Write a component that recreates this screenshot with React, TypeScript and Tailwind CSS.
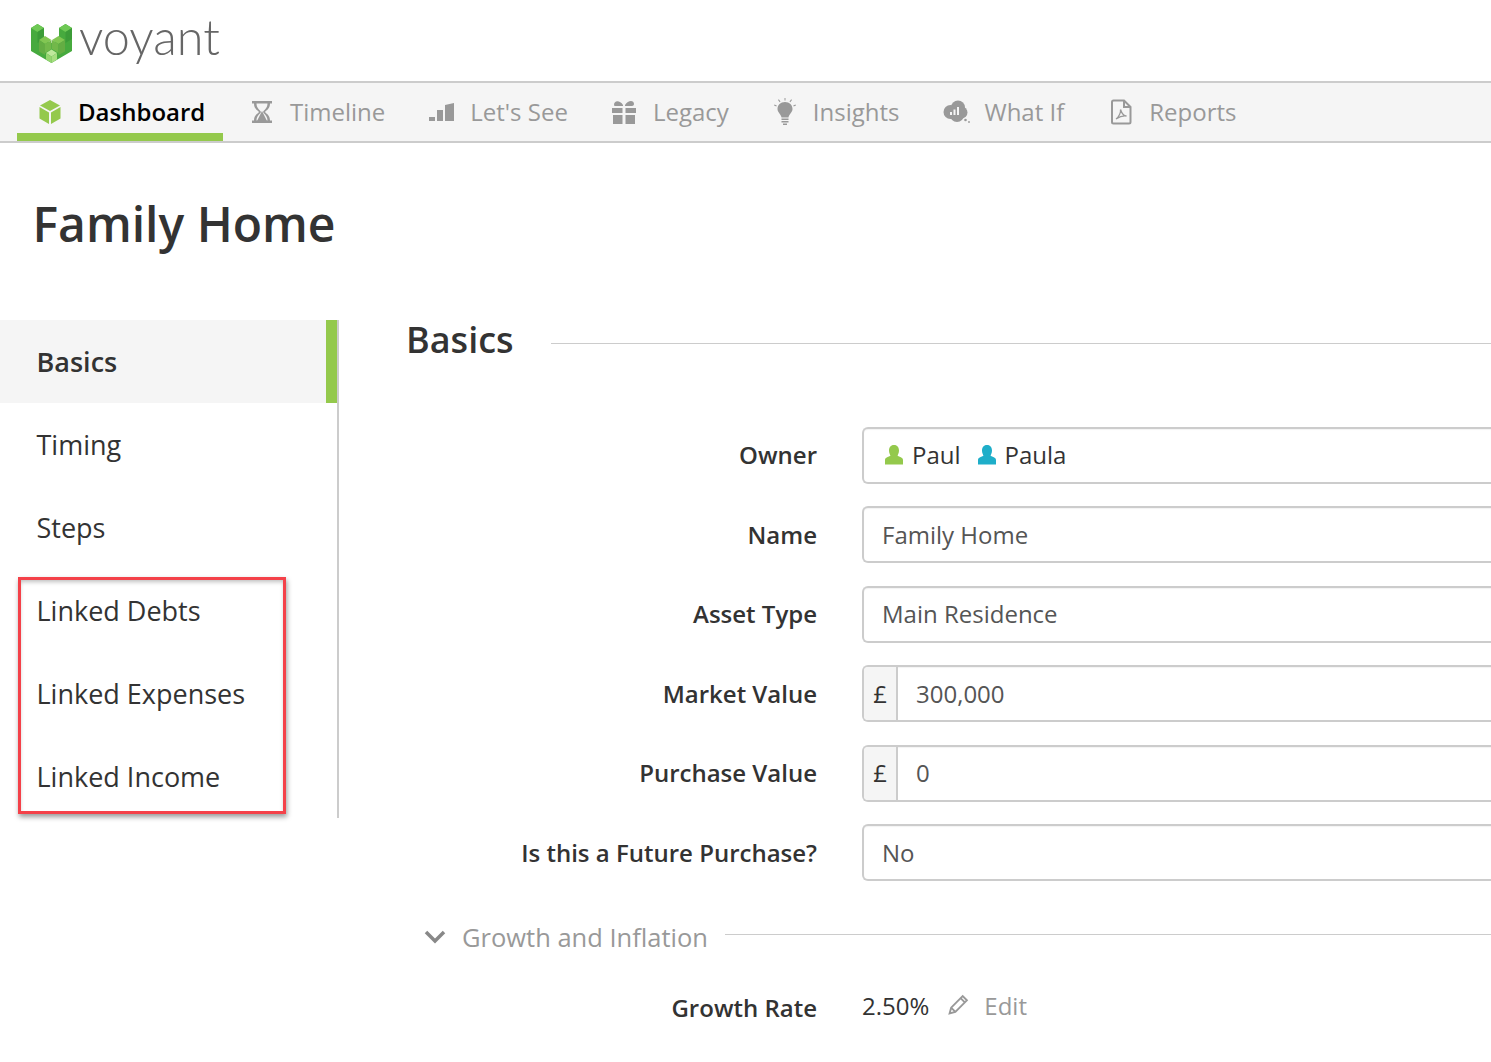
const font = "font-['Open_Sans','Noto_Sans',sans-serif]";

function Cube() {
  return (
    <svg width="24" height="26" viewBox="0 0 24 26">
      <path d="M12 1 L22 6.500 L12 12 L2 6.500Z" fill="#94c94c" />
      <path d="M1.500 8 L11 13.500 V25 L1.500 19.500Z" fill="#94c94c" />
      <path d="M22.500 8 L13 13.500 V25 L22.500 19.500Z" fill="#94c94c" />
    </svg>
  );
}

function Hourglass() {
  return (
    <svg width="24" height="24" viewBox="0 0 24 24" fill="#999">
      <path d="M2 1 H22 V3.500 H20 C20 9 16.500 10 15 12 C16.500 14 20 15 20 20.500 H22 V23 H2 V20.500 H4 C4 15 7.500 14 9 12 C7.500 10 4 9 4 3.500 H2Z M6.500 3.500 C6.500 8 9.500 9.500 11 12 C9.500 14.500 6.500 16 6.500 20.500 H17.500 C17.500 16 14.500 14.500 13 12 C14.500 9.500 17.500 8 17.500 3.500Z" fillRule="evenodd" />
      <path d="M12 11 L17 21 H7Z" />
    </svg>
  );
}

function Bars() {
  return (
    <svg width="26" height="20" viewBox="0 0 26 20" fill="#999">
      <rect x="0" y="15" width="6" height="4" />
      <rect x="8" y="8" width="6" height="11" />
      <path d="M16 3 L25 1 V19 H16Z" />
    </svg>
  );
}

function Gift() {
  return (
    <svg width="24" height="26" viewBox="0 0 24 26" fill="#999">
      <path d="M2 6 C2 1 8 1 11 6 L11 7 H4 C3 7 2 7 2 6Z" />
      <path d="M22 5 C22 1 16 1 13 6 L13 7 H20 C21 7 22 6 22 5Z" />
      <rect x="0" y="9" width="10.500" height="5" />
      <rect x="13.500" y="9" width="10.500" height="5" />
      <rect x="1" y="16" width="9.500" height="9" />
      <rect x="13.500" y="16" width="9.500" height="9" />
    </svg>
  );
}

function Bulb() {
  return (
    <svg width="22" height="28" viewBox="0 0 22 28" fill="#999">
      <path d="M11 4 C15.500 4 18.500 7 18.500 11 C18.500 14.500 15 16 14.500 19.500 H7.500 C7 16 3.500 14.500 3.500 11 C3.500 7 6.500 4 11 4Z" />
      <rect x="7.500" y="20.500" width="7" height="1.500" />
      <rect x="7.500" y="23" width="7" height="1.500" />
      <rect x="9" y="25.500" width="4" height="1.500" />
      <path d="M10.500 0 H11.500 V2.500 H10.500Z M4 2 L4.800 1.300 L6.500 3.500 L5.700 4.200Z M18 2 L17.200 1.300 L15.500 3.500 L16.300 4.200Z M0 7.500 L.5 6.500 L2.800 7.500 L2.300 8.500Z M22 7.500 L21.500 6.500 L19.200 7.500 L19.700 8.500Z" />
    </svg>
  );
}

function Cloud() {
  return (
    <svg width="28" height="24" viewBox="0 0 28 24" fill="#999">
      <circle cx="15" cy="7.500" r="7" />
      <circle cx="7.500" cy="12" r="7" />
      <circle cx="14" cy="15" r="7" />
      <circle cx="18.500" cy="12.500" r="6" />
      <rect x="7" y="12" width="2" height="3" fill="#f5f5f5" />
      <rect x="10.500" y="9.500" width="2" height="5.500" fill="#f5f5f5" />
      <rect x="14" y="7" width="2" height="8" fill="#f5f5f5" />
      <circle cx="22.500" cy="20" r="1.300" />
      <circle cx="26" cy="22" r=".9" />
    </svg>
  );
}

function Pdf() {
  return (
    <svg width="22" height="26" viewBox="0 0 22 26" fill="none" stroke="#999" strokeWidth="2">
      <path d="M3.500 1.500 H14 L20.500 8 V23 Q20.500 24.500 19 24.500 H3.500 Q2 24.500 2 23 V3 Q2 1.500 3.500 1.500Z" />
      <path d="M14 1.500 V8 H20.500" />
      <path d="M6 20 C9 18 11 13 10.500 10.500 C12 15 14 17 16.500 17 C13 16.500 9 18 6 20Z" strokeWidth="1.300" />
    </svg>
  );
}

function Person({ color }: { color: string }) {
  return (
    <svg width="18" height="20" viewBox="0 0 18 20" fill={color}>
      <path d="M9 0 C12.500 0 14 2.500 14 5.500 C14 8 13 9.500 12.500 10.500 C14 12 18 12 18 15 V19.500 H0 V15 C0 12 4 12 5.500 10.500 C5 9.500 4 8 4 5.500 C4 2.500 5.500 0 9 0Z" />
    </svg>
  );
}

function Logo() {
  return (
    <svg width="41" height="41" viewBox="0 0 41 41">
      <path d="M0 6 L6.500 2 L13 6 V17 L20.500 21 L28 17 V6 L34.500 2 L41 6 V29 L20.500 41 L0 29Z" fill="#47aa3e" />
      <path d="M0 6 L6.500 2 L13 6 L6.500 10Z" fill="#6fc955" />
      <path d="M28 6 L34.500 2 L41 6 L34.500 10Z" fill="#6fc955" />
      <path d="M6.500 10 L13 6 V17 L6.500 21Z" fill="#3c9c38" />
      <path d="M34.500 10 L41 6 V17 L34.500 21Z" fill="#3c9c38" />
      <path d="M8 18 L14 14 L20.500 18 L14 22Z" fill="#82c653" />
      <path d="M21 18 L27.500 14 L34 18 L27.500 22Z" fill="#82c653" />
      <path d="M8 18 L14 22 V33 L8 29.500Z" fill="#64ad43" />
      <path d="M14 22 L20.500 18 V27 L14 31Z" fill="#72b84a" />
      <path d="M21 18 L27.500 22 V31 L21 27Z" fill="#72b84a" />
      <path d="M27.500 22 L34 18 V29.500 L27.500 33Z" fill="#64ad43" />
      <path d="M15 31 L20.500 27.500 L26 31 L20.500 34.500Z" fill="#bfe89c" />
      <path d="M15 31 L20.500 34.500 V41 L15 37.500Z" fill="#95d66f" />
      <path d="M20.500 34.500 L26 31 V37.500 L20.500 41Z" fill="#a7de80" />
    </svg>
  );
}

const navItems = [
  { label: 'Timeline', icon: <Hourglass />, cls: 'ml-[27px] gap-[16px]' },
  { label: "Let's See", icon: <Bars />, cls: 'ml-[44px] gap-[15px]' },
  { label: 'Legacy', icon: <Gift />, cls: 'ml-[44px] gap-[17px]' },
  { label: 'Insights', icon: <Bulb />, cls: 'ml-[45px] gap-[17px]' },
  { label: 'What If', icon: <Cloud />, cls: 'ml-[44px] gap-[13px]' },
  { label: 'Reports', icon: <Pdf />, cls: 'ml-[46px] gap-[17px]' },
];

function Field({ label, children }: { label: string; children: React.ReactNode }) {
  return (
    <div className="flex items-center h-[57px] mb-[22.500px]">
      <div className="w-[411px] text-right text-[24px] font-semibold text-[#333]">{label}</div>
      <div className="ml-[45px] flex-1 h-[57px] border-2 border-r-0 border-[#ccc] rounded-l-[6px] flex items-center text-[24px] text-[#555] overflow-hidden shadow-[inset_0_1px_1px_rgba(0,0,0,0.05)]">
        {children}
      </div>
    </div>
  );
}

function Money({ value }: { value: string }) {
  return (
    <>
      <div className="w-[34px] h-full bg-[#f5f5f5] border-r-2 border-[#ccc] flex items-center justify-center text-[#333]">£</div>
      <div className="pl-[18px]">{value}</div>
    </>
  );
}

export default function App() {
  return (
    <div className={`${font} w-[1491px] h-[1062px] overflow-hidden bg-white text-[#333]`}>
      <div className="h-[81px] flex items-start pl-[31px] pt-[13px]">
        <div className="mt-[9px]"><Logo /></div>
        <div className="ml-[7px] text-[48.600px] leading-[46px] text-[#666] font-light font-['Lato',sans-serif]">voyant</div>
      </div>

      <div className="h-[62px] bg-[#f5f5f5] border-y-2 border-[#ccc] flex pl-[17px] text-[24px]">
        <div className="w-[206px] h-[58px] border-b-[8px] border-[#94c94c] pt-[8px] flex items-center gap-[16px] pl-[21px] text-black font-semibold">
          <Cube />
          <span>Dashboard</span>
        </div>
        {navItems.map((n) => (
          <div key={n.label} className={`flex items-center text-[#999] ${n.cls}`}>
            {n.icon}
            <span>{n.label}</span>
          </div>
        ))}
      </div>

      <h1 className="pl-[32.500px] pt-[49px] text-[48px] leading-[64px] font-semibold text-[#333]">Family Home</h1>

      <div className="flex mt-[64px]">
        <aside className="w-[339px] h-[498px] border-r-2 border-[#ccc] shrink-0 relative text-[27px]">
          <div className="h-[83px] bg-[#f5f5f5] border-r-[11px] border-[#94c94c] pt-[2px] flex items-center pl-[36.500px] font-semibold">Basics</div>
          {['Timing', 'Steps', 'Linked Debts', 'Linked Expenses', 'Linked Income'].map((s) => (
            <div key={s} className="h-[83px] pt-[2px] flex items-center pl-[36.500px]">{s}</div>
          ))}
          <div className="absolute left-[18px] top-[257px] w-[268px] h-[237px] border-[3px] border-[#f44149] shadow-[1px_3px_5px_rgba(0,0,0,0.4),inset_0_3px_4px_-1px_rgba(0,0,0,0.25)]" />
        </aside>

        <main className="flex-1 pl-[67px] min-w-0">
          <div className="flex items-center h-[40px]">
            <h2 className="text-[36px] leading-[40px] font-semibold text-[#333]">Basics</h2>
            <div className="ml-[37px] flex-1 h-px bg-[#ccc] mt-[6px]" />
          </div>

          <div className="mt-[66.900px]">
            <Field label="Owner">
              <div className="pl-[21px] flex items-center text-[#333]">
                <Person color="#94c94c" />
                <span className="ml-[9px]">Paul</span>
                <span className="ml-[17px]"><Person color="#1eaec9" /></span>
                <span className="ml-[9px]">Paula</span>
              </div>
            </Field>
            <Field label="Name"><div className="pl-[18px]">Family Home</div></Field>
            <Field label="Asset Type"><div className="pl-[18px]">Main Residence</div></Field>
            <Field label="Market Value"><Money value="300,000" /></Field>
            <Field label="Purchase Value"><Money value="0" /></Field>
            <Field label="Is this a Future Purchase?"><div className="pl-[18px]">No</div></Field>
          </div>

          <div className="flex items-center mt-[36px] pl-[18px] h-[40px] text-[#999]">
            <svg width="22" height="14" viewBox="0 0 22 14" fill="none" stroke="#888" strokeWidth="3.500"><path d="M2 2 L11 11 L20 2" /></svg>
            <span className="ml-[16px] text-[25.500px]">Growth and Inflation</span>
            <div className="ml-[17px] flex-1 h-px bg-[#ccc] mt-[-6px]" />
          </div>

          <div className="flex items-center mt-[31px] h-[40px]">
            <div className="w-[411px] text-right text-[24px] font-semibold">Growth Rate</div>
            <div className="ml-[45px] text-[24px] mt-[-4px]">2.50%</div>
            <svg className="ml-[19px] mt-[-7px]" width="21" height="21" viewBox="0 0 20 20" fill="none" stroke="#999" strokeWidth="1.800">
              <path d="M1.500 18.500 L3 13 L14 2 L18 6 L7 17Z M3 13 L7 17 M12 4 L16 8" />
            </svg>
            <span className="ml-[15px] text-[24px] text-[#999] mt-[-4px]">Edit</span>
          </div>
        </main>
      </div>
    </div>
  );
}
